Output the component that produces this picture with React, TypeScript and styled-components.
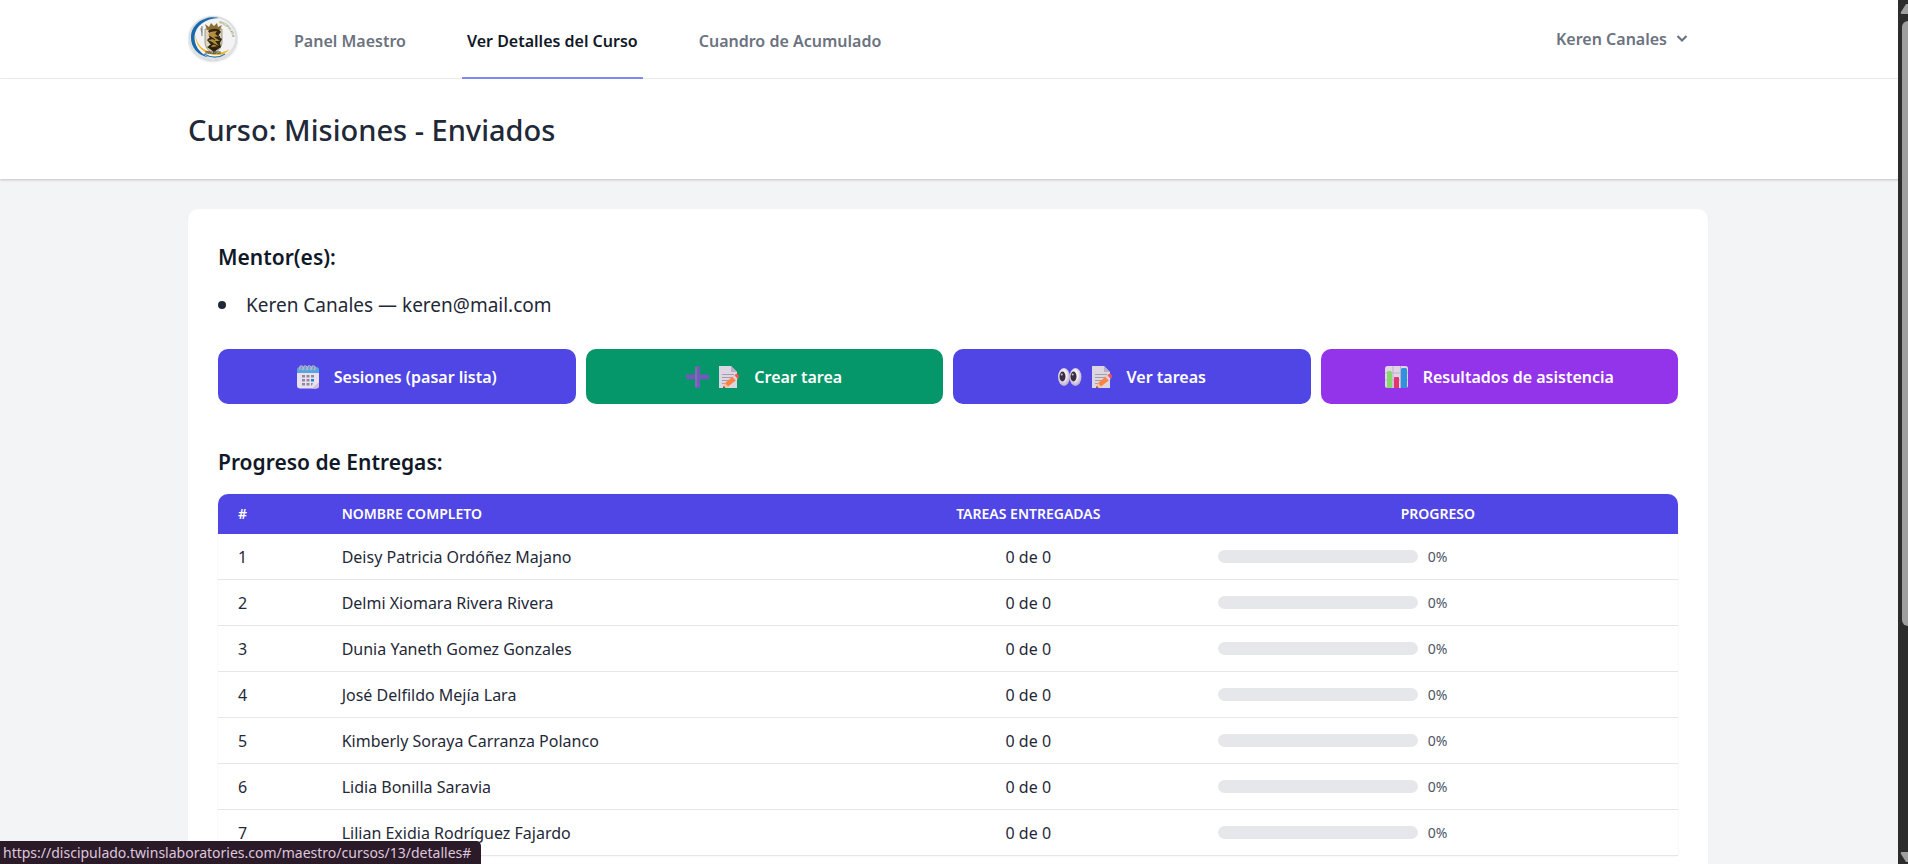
import React from "react";
import styled, { createGlobalStyle } from "styled-components";

const GlobalStyle = createGlobalStyle`
  *, *::before, *::after { box-sizing: border-box; }
  html, body { margin: 0; padding: 0; }
  body {
    background: #f3f4f6;
    color: #1f2937;
    font-family: "Segoe UI", "Noto Sans", "Open Sans", sans-serif;
    font-size: 16px;
    line-height: 24px;
    overflow: hidden;
  }
  h1, h2, ul { margin: 0; padding: 0; }
  a { color: inherit; text-decoration: none; }
  button { font: inherit; border: 0; cursor: pointer; }
`;

const Page = styled.div`
  display: flex;
  flex-direction: column;
  height: 100vh;
  overflow: hidden;
`;

const Shell = styled.div`
  width: 100%;
  max-width: 1520px;
  margin: 0 auto;
`;

const TopBar = styled.nav`
  flex: none;
  padding: 0 12px 0 0;
  background: #ffffff;
  border-bottom: 1px solid #f0f0f1;
`;

const TopBarInner = styled(Shell)`
  display: flex;
  align-items: stretch;
  gap: 51px;
  height: 78px;
`;

const Brand = styled.a`
  display: flex;
  align-items: center;
  svg { display: block; }
`;

const NavLink = styled.a<{ $active?: boolean }>`
  display: flex;
  align-items: center;
  height: 79px;
  padding: 4px 5px 0;
  border-bottom: 2px solid ${(p) => (p.$active ? "#818cf8" : "transparent")};
  color: ${(p) => (p.$active ? "#111827" : "#6b7280")};
  font-weight: 600;
  white-space: nowrap;
`;

const UserButton = styled.button`
  display: flex;
  align-items: center;
  gap: 8px;
  margin-left: auto;
  padding: 0 19px 0 0;
  background: transparent;
  color: #6b7280;
  font-weight: 600;
`;

const PageHeader = styled.header`
  position: relative;
  flex: none;
  padding: 31px 12px 29px 0;
  background: #ffffff;
  box-shadow: 0 1px 3px rgba(0, 0, 0, 0.14), 0 1px 2px rgba(0, 0, 0, 0.08);
`;

const Title = styled.h1`
  font-size: 29px;
  line-height: 40px;
  font-weight: 500;
  color: #1f2937;
`;

const Main = styled.main`
  flex: 1;
  display: flex;
  padding: 30px 12px 0 0;
`;

const Card = styled(Shell)`
  padding: 30px;
  background: #ffffff;
  border-radius: 10px 10px 0 0;
  box-shadow: 0 1px 2px rgba(0, 0, 0, 0.06);
`;

const SectionTitle = styled.h2`
  font-size: 21px;
  line-height: 36px;
  font-weight: 600;
  color: #111827;
`;

const MentorList = styled.ul`
  margin: 16px 0 30px;
  list-style: none;
  font-size: 19px;
  line-height: 28px;
`;

const Mentor = styled.li`
  display: flex;
  align-items: center;
  gap: 20px;
  &::before {
    content: "";
    width: 8px;
    height: 8px;
    border-radius: 50%;
    background: #1f2937;
  }
`;

const Actions = styled.div`
  display: grid;
  grid-template-columns: repeat(4, 1fr);
  gap: 10px;
  margin-bottom: 40px;
`;

const tones = { indigo: "#4f46e5", green: "#059669", purple: "#9333ea" };

const ActionButton = styled.button<{ $tone: keyof typeof tones }>`
  display: flex;
  align-items: center;
  justify-content: center;
  gap: 15px;
  height: 55px;
  border-radius: 10px;
  background: ${(p) => tones[p.$tone]};
  color: #ffffff;
  font-weight: 600;
`;

const IconGroup = styled.span`
  display: flex;
  gap: 10px;
  svg { display: block; }
`;

const TableFrame = styled.div`
  margin-top: 14px;
  border-radius: 10px 10px 0 0;
  overflow: hidden;
  box-shadow: 0 0 2px rgba(0, 0, 0, 0.08);
`;

const Table = styled.table`
  width: 100%;
  table-layout: fixed;
  border-collapse: separate;
  border-spacing: 0;
  thead { background: #4f46e5; color: #ffffff; }
`;

const HeadCell = styled.th<{ $center?: boolean }>`
  height: 40px;
  padding: 0 20px;
  font-size: 14px;
  line-height: 20px;
  font-weight: 600;
  text-align: ${(p) => (p.$center ? "center" : "left")};
  text-transform: uppercase;
`;

const Cell = styled.td<{ $center?: boolean }>`
  height: 46px;
  padding: 1px 20px 0;
  border-bottom: 1px solid #e5e7eb;
  text-align: ${(p) => (p.$center ? "center" : "left")};
`;

const ProgressCell = styled(Cell)`
  padding-top: 0;
`;

const Progress = styled.div`
  display: flex;
  align-items: center;
  gap: 10px;
  color: #4b5563;
  font-size: 14px;
  line-height: 20px;
`;

const Track = styled.div`
  width: 200px;
  height: 13px;
  border-radius: 7px;
  background: #e5e7eb;
  overflow: hidden;
`;

const Fill = styled.div`
  height: 100%;
  background: #4f46e5;
`;

const LinkHint = styled.div`
  position: fixed;
  left: 0;
  bottom: 0;
  padding: 0 10px 0 3px;
  border-top-right-radius: 5px;
  background: #2b1b29;
  color: #dfc6dd;
  font-size: 14px;
  line-height: 23px;
  white-space: nowrap;
`;

const Scrollbar = styled.div`
  position: fixed;
  top: 0;
  right: 0;
  bottom: 0;
  width: 10px;
  overflow: hidden;
  background: #2c2c2c;
  display: flex;
  flex-direction: column;
  justify-content: space-between;
  svg { display: block; flex: none; }
`;

const Thumb = styled.div`
  flex: 0 0 70%;
  width: 12px;
  margin: 0 0 auto 4px;
  border-radius: 6px 0 0 6px;
  background: #9f9f9f;
`;

const Logo = () => (
  <svg width="50" height="50" viewBox="0 0 50 50" role="img" aria-label="Discipulado">
    <defs>
      <path id="arc" d="M31 9 A17 17 0 0 1 41 36" />
      <filter id="soft" x="-20%" y="-20%" width="140%" height="140%">
        <feDropShadow dx="0" dy="1" stdDeviation="1" floodOpacity="0.25" />
      </filter>
    </defs>
    <ellipse cx="25" cy="24" rx="24.500" ry="22.300" fill="#dedfe1" filter="url(#soft)" />
    <ellipse cx="25" cy="24" rx="22.300" ry="20.200" fill="#f3f3f5" />
    <path d="M31 4C18 1 3.500 9 3 23c-.5 10 7 19 18 20.500C11 39 6 31 6.500 22 7.500 12 17 4.500 31 4Z" fill="#1769ab" />
    <path d="M7.500 20c-1 12 9 21 21 21 6 0 10-2 13-6-4 3-9 4-15 3C16 38 8 31 7.500 20Z" fill="#f8b51d" />
    <path d="M16 40c7 4 15 4 21 0" fill="none" stroke="#2e78b6" strokeWidth="1.200" />
    <path d="M17 15v14c1 6 4 8 8 11 5-3 8-5 9-11V15Z" fill="#ddd5c2" stroke="#857d66" strokeWidth=".7" />
    <path d="m17 10 4 3 2-4 3 3 3-3 1 4 4-2-2 5H19Z" fill="#8b6e30" />
    <path d="M20 17c4-3 11-3 13 1l-3 4 4 3-2 4 1 4-7 5-7-5 4-2-4-5 4-4Z" fill="#34270f" />
    <path d="m22 18 7-1-2 3 5 2-6 1 6 4-5 0 4 5-8 1 3-4-6-3 6-1-6-4Z" fill="#b58f40" />
    <path d="m21 32 5-2 6 3M21 22l6 4M28 20l4 3M23 35h6" stroke="#201a0e" strokeWidth="1" fill="none" />
    <path d="M14 12v10M13 14l1 6" stroke="#8c8988" strokeWidth="1.200" />
    <text fontSize="3" fontWeight="700" fill="#7f9648"><textPath href="#arc">DISCIPULADO</textPath></text>
    <text x="25" y="40" fontSize="3" fontWeight="700" textAnchor="middle" fill="#333c43">ENVIADOS</text>
  </svg>
);

const ChevronIcon = () => (
  <svg width="14" height="14" viewBox="0 0 14 14" aria-hidden="true">
    <path d="m2.500 4 4.500 4.500L11.500 4" fill="none" stroke="#6b7280" strokeWidth="2.200" />
  </svg>
);

const CalendarIcon = () => (
  <svg width="22" height="24" viewBox="0 0 22 24" aria-hidden="true">
    <rect x="0" y="3" width="22" height="20.500" rx="3" fill="#e9e1ef" />
    <path d="M0 8V5a3 3 0 0 1 3-3h16a3 3 0 0 1 3 3v3Z" fill="#57a5dd" />
    <path d="M22 17v3.500a3 3 0 0 1-3 3h-4Z" fill="#cfc1d8" />
    <g fill="none" stroke="#b9b3c6" strokeWidth="1.300">
      <path d="M3 5c-1-3 .5-4.500 2-4s1.500 3 0 4" /><path d="M7 5c-1-3 .5-4.500 2-4s1.500 3 0 4" />
      <path d="M11 5c-1-3 .5-4.500 2-4s1.500 3 0 4" /><path d="M15 5c-1-3 .5-4.500 2-4s1.500 3 0 4" />
    </g>
    <g fill="#918a9c">
      <path d="M5 10h3v2.500H5zM9.500 10h3v2.500h-3zM14 10h3v2.500h-3zM5 14h3v2.500H5zM9.500 14h3v2.500h-3zM5 18h3v2.500H5zM9.500 18h3v2.500h-3z" />
      <path d="M14 18h2l-1 2.500h-1z" />
    </g>
    <rect x="14" y="14" width="3" height="2.500" fill="#1686d9" />
  </svg>
);

const PlusIcon = () => (
  <svg width="23" height="24" viewBox="0 0 23 24" aria-hidden="true">
    <defs>
      <linearGradient id="plus" x1="0" y1="0" x2="0" y2="1">
        <stop offset="0" stopColor="#6c5fae" /><stop offset="1" stopColor="#7958c4" />
      </linearGradient>
    </defs>
    <rect x="0" y="9.500" width="23" height="4.500" rx="1.500" fill="#7b55be" />
    <rect x="9" y="1" width="5" height="22" rx="1.500" fill="url(#plus)" />
    <path d="M1 13.500h8M14 13.500h8" stroke="#8846d8" strokeWidth="1" />
    <path d="M10 2v20" stroke="#8b81a8" strokeWidth="1" />
  </svg>
);

const MemoIcon = () => (
  <svg width="20" height="24" viewBox="0 0 20 24" aria-hidden="true">
    <path d="M0 1h12l6 6v16H0Z" fill="#dcd5e2" />
    <path d="M12 1v6h6Z" fill="#b9aec6" />
    <path d="M3 9.500h12M3 12.500h12M3 15.500h8M3 18.500h5" stroke="#a69cab" strokeWidth="1" />
    <path d="m4 23 2-5 9-7.500 3.500 3.500-10 8Z" fill="#fb8443" />
    <path d="m4 23 2-5 3.500 4Z" fill="#ffc49a" />
    <path d="m4 23 .8-2 1.500 1.500Z" fill="#54303b" />
    <path d="m13.500 12 2-1.800 3.300 3.700-2 1.700Z" fill="#dfd3e5" />
    <path d="m15.500 10.200 1.500-1.200c1.500-1 4 1.500 2.500 3.500l-1 1.200Z" fill="#f4574f" />
  </svg>
);

const EyesIcon = () => (
  <svg width="24" height="24" viewBox="0 0 24 24" aria-hidden="true">
    <defs>
      <radialGradient id="eye" cx=".45" cy=".4" r=".62">
        <stop offset=".4" stopColor="#f6f1f8" /><stop offset="1" stopColor="#b9a2c8" />
      </radialGradient>
    </defs>
    <ellipse cx="6" cy="12" rx="6" ry="9" fill="url(#eye)" />
    <ellipse cx="17.500" cy="12" rx="6" ry="9" fill="url(#eye)" />
    <ellipse cx="4.500" cy="11.500" rx="3" ry="5" fill="#3a3044" />
    <ellipse cx="15.500" cy="11.500" rx="3" ry="5" fill="#3a3044" />
    <circle cx="3.700" cy="9.500" r="1" fill="#cfc6d6" />
    <circle cx="14.700" cy="9.500" r="1" fill="#cfc6d6" />
  </svg>
);

const ChartIcon = () => (
  <svg width="23" height="24" viewBox="0 0 23 24" aria-hidden="true">
    <rect x="0" y="1" width="23" height="22" rx="2.500" fill="#dfd6e5" />
    <path d="M0 8h23M0 15h23M8 1v22M15.500 1v22" stroke="#bfb3c9" strokeWidth="1" />
    <path d="M2 7.500a1.500 1.500 0 0 1 1.500-1.500h2A1.500 1.500 0 0 1 7 7.500V23H2Z" fill="#86d86c" />
    <path d="M9 13a1 1 0 0 1 1-1h3a1 1 0 0 1 1 1v10H9Z" fill="#e0356f" />
    <path d="M16 4.500A1.500 1.500 0 0 1 17.500 3h3A1.500 1.500 0 0 1 22 4.500V23h-6Z" fill="#2f91df" />
  </svg>
);

const actions: { label: string; tone: keyof typeof tones; icons: React.ReactNode }[] = [
  { label: "Sesiones (pasar lista)", tone: "indigo", icons: <CalendarIcon /> },
  { label: "Crear tarea", tone: "green", icons: <><PlusIcon /><MemoIcon /></> },
  { label: "Ver tareas", tone: "indigo", icons: <><EyesIcon /><MemoIcon /></> },
  { label: "Resultados de asistencia", tone: "purple", icons: <ChartIcon /> },
];

const students = [
  "Deisy Patricia Ordóñez Majano",
  "Delmi Xiomara Rivera Rivera",
  "Dunia Yaneth Gomez Gonzales",
  "José Delfildo Mejía Lara",
  "Kimberly Soraya Carranza Polanco",
  "Lidia Bonilla Saravia",
  "Lilian Exidia Rodríguez Fajardo",
].map((name) => ({ name, done: 0, total: 0, percent: 0 }));

export default function App() {
  return (
    <Page>
      <GlobalStyle />
      <TopBar>
        <TopBarInner>
          <Brand href="#"><Logo /></Brand>
          <NavLink href="#">Panel Maestro</NavLink>
          <NavLink href="#" $active aria-current="page">Ver Detalles del Curso</NavLink>
          <NavLink href="#">Cuandro de Acumulado</NavLink>
          <UserButton type="button">Keren Canales<ChevronIcon /></UserButton>
        </TopBarInner>
      </TopBar>

      <PageHeader>
        <Shell><Title>Curso: Misiones - Enviados</Title></Shell>
      </PageHeader>

      <Main>
        <Card>
          <SectionTitle>Mentor(es):</SectionTitle>
          <MentorList>
            <Mentor>Keren Canales — keren@mail.com</Mentor>
          </MentorList>

          <Actions>
            {actions.map((a) => (
              <ActionButton key={a.label} type="button" $tone={a.tone}>
                <IconGroup>{a.icons}</IconGroup>
                {a.label}
              </ActionButton>
            ))}
          </Actions>

          <SectionTitle>Progreso de Entregas:</SectionTitle>
          <TableFrame>
            <Table>
              <colgroup>
                <col width="7.1%" />
                <col width="36.8%" />
                <col width="23.2%" />
                <col width="32.9%" />
              </colgroup>
              <thead>
                <tr>
                  <HeadCell>#</HeadCell>
                  <HeadCell>Nombre completo</HeadCell>
                  <HeadCell $center>Tareas entregadas</HeadCell>
                  <HeadCell $center>Progreso</HeadCell>
                </tr>
              </thead>
              <tbody>
                {students.map((s, i) => (
                  <tr key={s.name}>
                    <Cell>{i + 1}</Cell>
                    <Cell>{s.name}</Cell>
                    <Cell $center>{s.done} de {s.total}</Cell>
                    <ProgressCell>
                      <Progress>
                        <Track><Fill style={{ width: `${s.percent}%` }} /></Track>
                        {s.percent}%
                      </Progress>
                    </ProgressCell>
                  </tr>
                ))}
              </tbody>
            </Table>
          </TableFrame>
        </Card>
      </Main>

      <LinkHint>https://discipulado.twinslaboratories.com/maestro/cursos/13/detalles#</LinkHint>
      <Scrollbar aria-hidden="true">
        <svg width="10" height="21" viewBox="0 0 10 21"><path d="M3 12 8 4h6v10H4Q2 14 3 12Z" fill="#9f9f9f" /></svg>
        <Thumb />
        <svg width="10" height="14" viewBox="0 0 10 14"><path d="M3 4 8 12h6V2H4Q2 2 3 4Z" fill="#9f9f9f" /></svg>
      </Scrollbar>
    </Page>
  );
}
